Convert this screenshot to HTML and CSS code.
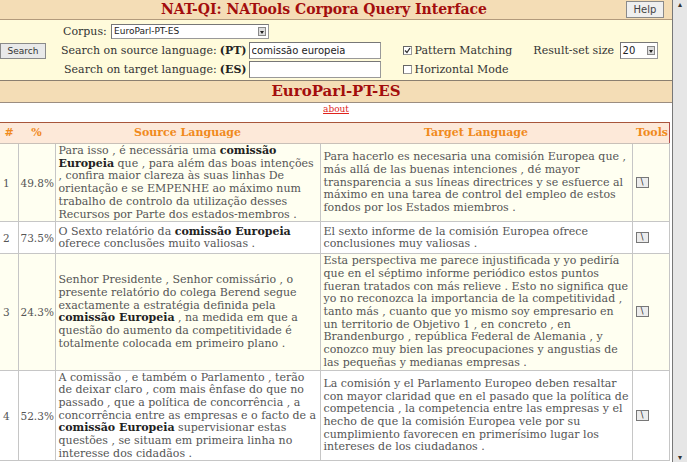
FILE: index.html
```html
<!DOCTYPE html>
<html lang="en">
<head>
    <meta charset="UTF-8">
    <title>NAT-QI: NATools Corpora Query Interface</title>
    <link rel="stylesheet" href="styles.css">
</head>
<body>
<div class="screen">
    <div class="page">
        <!-- Title and help -->
        <div class="titlebar">
            <h1 class="title">NAT-QI: NATools Corpora Query Interface</h1>
            <button class="help-btn">Help</button>
        </div>

        <!-- Query form -->
        <form class="query">
            <button type="button" class="search-btn">Search</button>
            <div class="fields">
                <div class="corpus-row">
                    <span class="label-corpus">Corpus:</span>
                    <div class="select corpus-select">EuroParl-PT-ES<span class="drop"></span></div>
                </div>
                <div class="search-grid">
                    <span class="label">Search on source language:</span>
                    <b class="lang">(PT)</b>
                    <input type="text" class="text-in" value="comissão europeia">
                    <span class="option"><span class="check"><svg width="7" height="7" viewBox="0 0 7 7"><path d="M1 3.5 L3 5.5 L6 1" fill="none" stroke="#333" stroke-width="1.3"/></svg></span>Pattern Matching</span>
                    <span class="size">Result-set size <span class="select size-select">20<span class="drop"></span></span></span>

                    <span class="label">Search on target language:</span>
                    <b class="lang">(ES)</b>
                    <input type="text" class="text-in" value="">
                    <span class="option"><span class="check"></span>Horizontal Mode</span>
                    <span></span>
                </div>
            </div>
        </form>

        <h2 class="corpus-name">EuroParl-PT-ES</h2>
        <div class="about"><a href="#">about</a></div>

        <!-- Concordance results -->
        <table class="results">
            <tr>
                <th class="c-num">#</th>
                <th class="c-pct">%</th>
                <th class="c-src">Source Language</th>
                <th class="c-tgt">Target Language</th>
                <th class="c-tools">Tools</th>
            </tr>
            <tr class="odd">
                <td class="num">1</td>
                <td class="num">49.8%</td>
                <td class="src">Para isso , é necessária uma <b>comissão Europeia</b> que , para além das boas intenções , confira maior clareza às suas linhas De orientação e se EMPENHE ao máximo num trabalho de controlo da utilização desses Recursos por Parte dos estados-membros .</td>
                <td>Para hacerlo es necesaria una comisión Europea que , más allá de las buenas intenciones , dé mayor transparencia a sus líneas directrices y se esfuerce al máximo en una tarea de control del empleo de estos fondos por los Estados miembros .</td>
                <td><span class="tool-btn">\</span></td>
            </tr>
            <tr>
                <td class="num">2</td>
                <td class="num">73.5%</td>
                <td class="src">O Sexto relatório da <b>comissão Europeia</b> oferece conclusões muito valiosas .</td>
                <td>El sexto informe de la comisión Europea ofrece conclusiones muy valiosas .</td>
                <td><span class="tool-btn">\</span></td>
            </tr>
            <tr class="odd">
                <td class="num">3</td>
                <td class="num">24.3%</td>
                <td class="src">Senhor Presidente , Senhor comissário , o presente relatório do colega Berend segue exactamente a estratégia definida pela <b>comissão Europeia</b> , na medida em que a questão do aumento da competitividade é totalmente colocada em primeiro plano .</td>
                <td>Esta perspectiva me parece injustificada y yo pediría que en el séptimo informe periódico estos puntos fueran tratados con más relieve . Esto no significa que yo no reconozca la importancia de la competitividad , tanto más , cuanto que yo mismo soy empresario en un territorio de Objetivo 1 , en concreto , en Brandenburgo , república Federal de Alemania , y conozco muy bien las preocupaciones y angustias de las pequeñas y medianas empresas .</td>
                <td><span class="tool-btn">\</span></td>
            </tr>
            <tr>
                <td class="num">4</td>
                <td class="num">52.3%</td>
                <td class="src">A comissão , e também o Parlamento , terão de deixar claro , com mais ênfase do que no passado , que a política de concorrência , a concorrência entre as empresas e o facto de a <b>comissão Europeia</b> supervisionar estas questões , se situam em primeira linha no interesse dos cidadãos .</td>
                <td>La comisión y el Parlamento Europeo deben resaltar con mayor claridad que en el pasado que la política de competencia , la competencia entre las empresas y el hecho de que la comisión Europea vele por su cumplimiento favorecen en primerísimo lugar los intereses de los ciudadanos .</td>
                <td><span class="tool-btn">\</span></td>
            </tr>
        </table>
    </div>

    <div class="scrollbar">
        <span class="arrow">&#9652;</span>
        <span class="arrow">&#9662;</span>
    </div>
</div>
</body>
</html>
```

FILE: styles.css
```css
body {
    margin: 0;
    font-family: "DejaVu Serif", serif;
    font-size: 11px;
    color: #555;
    background-color: #fff;
}

.screen {
    display: flex;
    height: 462px;
    overflow: hidden;
}

.page {
    flex: 1;
    min-width: 0;
    overflow: hidden;
}

/* title bar */
.titlebar {
    display: flex;
    align-items: center;
    height: 19px;
    background-color: #f4ddb6;
    border-bottom: 1px solid #b29a7c;
}

.title {
    flex: 1;
    margin: 0;
    padding-left: 22px;
    text-align: center;
    font-size: 14px;
    line-height: 19px;
    color: #a30d0d;
}

.help-btn {
    width: 38px;
    height: 17px;
    margin-right: 8px;
    padding: 0;
    font-family: "DejaVu Sans", sans-serif;
    font-size: 10px;
    color: #444;
    background-color: #efefef;
    border: 1px solid #8a8a8a;
}

/* query form */
.query {
    display: flex;
    align-items: center;
    height: 60px;
    margin: 0;
    background-color: #fffbdb;
    border-bottom: 1px solid #8b7f70;
}

.search-btn {
    width: 46px;
    height: 16px;
    padding: 0;
    margin-top: 1px;
    font-family: "DejaVu Sans", sans-serif;
    font-size: 9px;
    color: #333;
    background-color: #e9e9e9;
    border: 1px solid #8a8a8a;
}

.fields {
    margin-left: 15px;
    color: #333;
    white-space: nowrap;
}

.corpus-row {
    display: flex;
    align-items: center;
    height: 19px;
    padding-left: 2px;
}

.label-corpus {
    width: 48px;
}

.search-grid {
    display: grid;
    grid-template-columns: auto auto auto auto auto;
    grid-auto-rows: 19px;
    align-items: center;
}

.label {
    text-align: right;
}

.lang {
    margin-left: 3px;
    text-align: right;
    color: #222;
}

.text-in {
    width: 132px;
    height: 17px;
    box-sizing: border-box;
    margin: 0 0 0 2px;
    padding: 0 2px;
    font-family: "DejaVu Sans", sans-serif;
    font-size: 10px;
    color: #222;
    border: 1px solid #999;
    border-top-color: #777;
    border-left-color: #777;
}

.select {
    position: relative;
    display: inline-block;
    vertical-align: middle;
    box-sizing: border-box;
    padding: 0 2px;
    font-family: "DejaVu Sans", sans-serif;
    font-size: 9px;
    line-height: 13px;
    color: #222;
    background-color: #fff;
    border: 1px solid #999;
    border-top-color: #777;
    border-left-color: #777;
}

.corpus-select {
    width: 158px;
    height: 15px;
}

.size-select {
    width: 38px;
    height: 17px;
    margin-left: 2px;
    font-size: 10px;
    line-height: 15px;
}

/* little arrow button inside selects */
.drop {
    position: absolute;
    right: 2px;
    top: 2px;
    width: 8px;
    height: 9px;
    background-color: #ddd;
    border: 1px solid #888;
    box-sizing: border-box;
}

.drop::after {
    content: "";
    position: absolute;
    left: 1px;
    top: 3px;
    border-left: 2px solid transparent;
    border-right: 2px solid transparent;
    border-top: 3px solid #222;
}

.size-select .drop {
    top: 3px;
}

.option {
    display: flex;
    align-items: center;
    margin-left: 22px;
}

.check {
    display: inline-flex;
    align-items: center;
    justify-content: center;
    width: 9px;
    height: 9px;
    margin-right: 3px;
    box-sizing: border-box;
    background-color: #fff;
    border: 1px solid #999;
    border-top-color: #666;
    border-left-color: #666;
}

.size {
    margin-left: 21px;
}

/* corpus heading */
.corpus-name {
    margin: 0;
    height: 21px;
    line-height: 21px;
    text-align: center;
    font-size: 15px;
    color: #a30d0d;
    background-color: #f4ddb6;
    border-bottom: 1px solid #9b8d80;
}

.about {
    text-align: center;
    font-size: 9px;
    line-height: 11px;
    margin: 1px 0 7px;
}

.about a {
    color: #e0231c;
}

/* results table */
.results {
    width: 668px;
    border-collapse: collapse;
    table-layout: fixed;
    line-height: 12.7px;
    border-top: 1px solid #a8553a;
    border-right: 1px solid #b04a4a;
}

.results th {
    height: 20px;
    padding: 0;
    font-size: 11px;
    color: #f08a1c;
    background-color: #fde9d9;
    border-bottom: 1px solid #c9c0b8;
}

.c-num { width: 18px; }
.c-pct { width: 37px; }
.c-src { width: 265px; }
.c-tgt { width: 312px; }
.c-tools { width: 36px; }

.results th.c-tools {
    text-align: right;
    padding-right: 1px;
}

.results td {
    padding: 1px 2px 0 3px;
    vertical-align: middle;
    border: 1px solid #c6c6c6;
    border-top: 0;
}

.results td.num {
    font-size: 10.5px;
    padding-left: 2px;
}

.results td.src {
    padding-right: 0;
}

.results td:first-child {
    border-left: 0;
    padding-left: 3px;
}

.results tr.odd td {
    background-color: #fffff1;
}

.results td b {
    color: #222;
}

.tool-btn {
    display: block;
    width: 13px;
    height: 11px;
    margin: 9px 0 10px;
    box-sizing: border-box;
    font-family: "DejaVu Sans", sans-serif;
    font-size: 8px;
    line-height: 9px;
    text-align: center;
    color: #222;
    background-color: #ececec;
    border: 1px solid #777;
}

/* window scrollbar */
.scrollbar {
    width: 14px;
    display: flex;
    flex-direction: column;
    justify-content: space-between;
    align-items: center;
    background-color: #e6e6e6;
    border-left: 1px solid #777;
    font-family: "DejaVu Sans", sans-serif;
    font-size: 8px;
    line-height: 9px;
    color: #333;
}
```
